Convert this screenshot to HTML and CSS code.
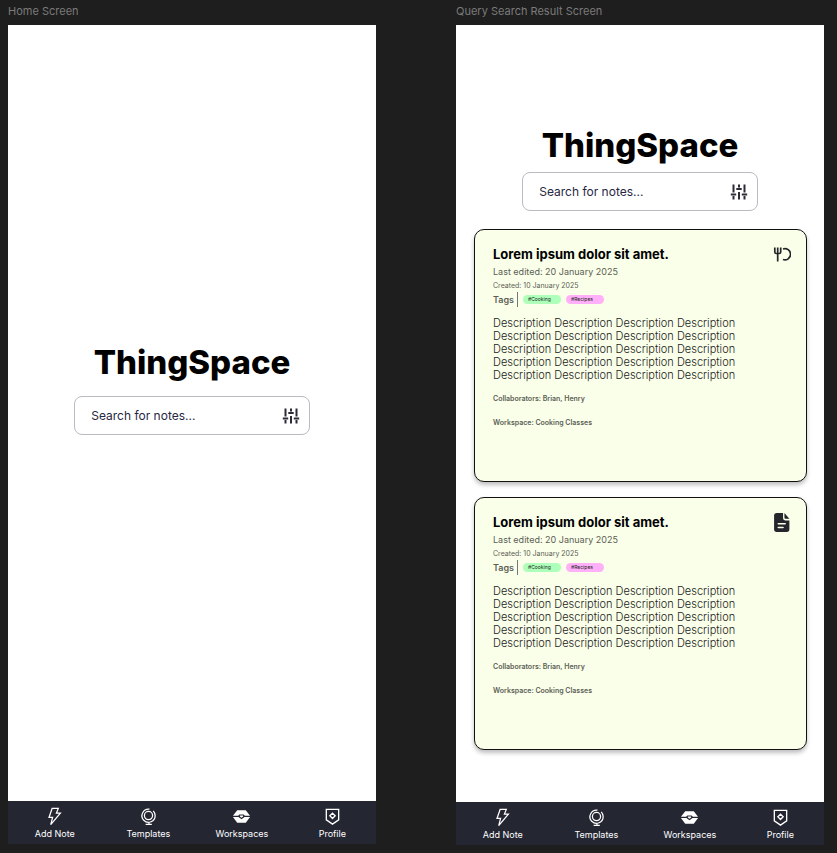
FILE: index.html
```html
<!DOCTYPE html>
<html lang="en">
<head>
<meta charset="utf-8">
<meta name="viewport" content="width=device-width, initial-scale=1">
<title>ThingSpace</title>
<link rel="stylesheet" href="styles.css">
</head>
<body>
<svg class="sprite" aria-hidden="true">
  <symbol id="i-filter" viewBox="0 0 18 18"><path d="M3.500 1.500v8M3.500 13v3.500M9 1.500v3M9 9v7.500M14.500 1.500v8M14.500 13v3.500" fill="none" stroke="currentColor" stroke-width="2"/><path d="M.8 11.500h5.400M6.300 6h5.400M11.800 11.500h5.400" fill="none" stroke="currentColor" stroke-width="1.800"/></symbol>
  <symbol id="i-bolt" viewBox="0 0 20 20"><path d="M7.500 1.500h6.500l-2 5h4.200L6 18.500l2-7.500H4.200z" fill="none" stroke="currentColor" stroke-width="1.300"/></symbol>
  <symbol id="i-globe" viewBox="0 0 20 20"><g fill="none" stroke="currentColor" stroke-width="1.300"><circle cx="10" cy="9" r="4.300"/><path d="M11 2.300A7 7 0 0 0 5 14a7 7 0 0 0 12-5c0-2-.8-3.700-2-5M10.500 16v2.300M7 18.300h6.500"/></g></symbol>
  <symbol id="i-work" viewBox="0 0 20 20"><path d="M5.500 3.500h9L19 9.300h-5.500l-1.200-1.500H7.700L6.500 9.300H1zM1 10.500h5.800L10 13l3.200-2.500H19l-4.500 6h-9z" fill="currentColor"/><path d="M8.300 9h3.400v1L10 11.300 8.300 10z" fill="currentColor"/></symbol>
  <symbol id="i-shield" viewBox="0 0 20 20"><path d="M3.500 2.500h13v11L10 18l-6.500-4.500zM10 6.500l2.800 2.800L10 12.100 7.200 9.300z" fill="none" stroke="currentColor" stroke-width="1.400"/></symbol>
  <symbol id="i-food" viewBox="0 0 18 16"><path d="M1.800 1v4.500q0 1.500 1.500 1.500h2.900q1.500 0 1.500-1.500V1M4.700 1v14M10 2.500a5.600 5.600 0 1 1 0 10.500" fill="none" stroke="currentColor" stroke-width="1.700"/></symbol>
  <symbol id="i-file" viewBox="0 0 16 18"><path d="M3 0h6v5q0 2 2 2h4v8.500q0 2.500-2.500 2.500H3q-2.500 0-2.500-2.500v-13Q.5 0 3 0z" fill="currentColor"/><path d="M10.300 0 15 5.500h-3.700q-1 0-1-1z" fill="currentColor"/><path d="M4.500 10.200h6.500M4.500 13.800h4.500" stroke="#faffe9" stroke-width="1.500" stroke-linecap="round"/></symbol>
</svg>

<section class="board board--home">
  <h2 class="board__name">Home Screen</h2>
  <div class="screen">
    <main class="screen__body">
      <h1 class="brand">ThingSpace</h1>
      <form class="search">
        <input class="search__input" type="text" placeholder="Search for notes..." aria-label="Search for notes">
        <button class="search__filter" type="button" aria-label="Filters"><svg><use href="#i-filter"/></svg></button>
      </form>
    </main>
    <nav class="tabs">
      <a class="tab" href="#"><svg><use href="#i-bolt"/></svg>Add Note</a>
      <a class="tab" href="#"><svg><use href="#i-globe"/></svg>Templates</a>
      <a class="tab" href="#"><svg><use href="#i-work"/></svg>Workspaces</a>
      <a class="tab" href="#"><svg><use href="#i-shield"/></svg>Profile</a>
    </nav>
  </div>
</section>

<section class="board board--results">
  <h2 class="board__name">Query Search Result Screen</h2>
  <div class="screen">
    <main class="screen__body">
      <h1 class="brand">ThingSpace</h1>
      <form class="search">
        <input class="search__input" type="text" placeholder="Search for notes..." aria-label="Search for notes">
        <button class="search__filter" type="button" aria-label="Filters"><svg><use href="#i-filter"/></svg></button>
      </form>
      <div class="notes">
        <article class="note">
          <header class="note__head"><h3 class="note__title">Lorem ipsum dolor sit amet.</h3><svg class="note__icon"><use href="#i-food"/></svg></header>
          <p class="note__edited">Last edited: 20 January 2025</p>
          <p class="note__created">Created: 10 January 2025</p>
          <div class="tags"><span class="tags__label">Tags</span><span class="tag tag--green">#Cooking</span><span class="tag tag--pink">#Recipes</span></div>
          <p class="note__text">Description Description Description Description Description Description Description Description Description Description Description Description Description Description Description Description Description Description Description Description</p>
          <p class="note__meta">Collaborators: Brian, Henry</p>
          <p class="note__meta">Workspace: Cooking Classes</p>
        </article>
        <article class="note">
          <header class="note__head"><h3 class="note__title">Lorem ipsum dolor sit amet.</h3><svg class="note__icon"><use href="#i-file"/></svg></header>
          <p class="note__edited">Last edited: 20 January 2025</p>
          <p class="note__created">Created: 10 January 2025</p>
          <div class="tags"><span class="tags__label">Tags</span><span class="tag tag--green">#Cooking</span><span class="tag tag--pink">#Recipes</span></div>
          <p class="note__text">Description Description Description Description Description Description Description Description Description Description Description Description Description Description Description Description Description Description Description Description</p>
          <p class="note__meta">Collaborators: Brian, Henry</p>
          <p class="note__meta">Workspace: Cooking Classes</p>
        </article>
      </div>
    </main>
    <nav class="tabs">
      <a class="tab" href="#"><svg><use href="#i-bolt"/></svg>Add Note</a>
      <a class="tab" href="#"><svg><use href="#i-globe"/></svg>Templates</a>
      <a class="tab" href="#"><svg><use href="#i-work"/></svg>Workspaces</a>
      <a class="tab" href="#"><svg><use href="#i-shield"/></svg>Profile</a>
    </nav>
  </div>
</section>
</body>
</html>
```
FILE: styles.css
```css
* { box-sizing: border-box; margin: 0; }

body {
  display: grid;
  grid-template-columns: 1fr 1fr;
  gap: 80px;
  min-height: 100vh;
  padding: 0 13px 0 8px;
  background: #1e1e1e;
  font-family: Inter, "Liberation Sans", sans-serif;
}

.sprite { position: absolute; width: 0; height: 0; }

.board { display: flex; flex-direction: column; padding-bottom: 9px; }
.board--results { padding-bottom: 8px; }

.board__name {
  height: 25px;
  color: #7b7b7b;
  font-size: 11px;
  font-weight: 400;
  line-height: 22px;
  white-space: nowrap;
}

.screen { display: flex; flex: 1; flex-direction: column; background: #fff; }
.screen__body {
  display: flex;
  flex: 1;
  flex-direction: column;
  align-items: center;
  gap: 12px;
  padding-top: 315px;
}
.board--results .screen__body { gap: 5px; padding-top: 98px; }

.brand {
  color: #000;
  font-size: 33px;
  font-weight: 800;
  line-height: 44px;
}

.search {
  display: flex;
  align-items: center;
  width: 64%;
  height: 39px;
  padding: 0 9px 0 16px;
  border: 1px solid #bbbac3;
  border-radius: 8px;
}
.search__input {
  flex: 1;
  min-width: 0;
  padding: 0;
  border: 0;
  outline: 0;
  background: none;
  color: #27273f;
  font: 400 12px Inter, "Liberation Sans", sans-serif;
}
.search__input::placeholder { color: #27273f; opacity: 1; }
.search__filter {
  display: flex;
  padding: 0;
  border: 0;
  background: none;
  color: #2b2c38;
}
.search__filter svg { width: 18px; height: 18px; }

.notes {
  display: flex;
  flex-direction: column;
  gap: 15px;
  align-self: stretch;
  padding: 13px 17px 51px 18px;
}

.note {
  min-height: 253px;
  padding: 15px 15px 15px 18px;
  border: 1px solid #111;
  border-radius: 10px;
  background: #faffe9;
  box-shadow: 0 3px 4px rgba(0, 0, 0, 0.25);
  color: #5c5e56;
}
.note__head { display: flex; justify-content: space-between; height: 19px; }
.note__title { color: #000; font-size: 13px; font-weight: 700; line-height: 18px; }
.note__icon { width: 18px; height: 19px; color: #25262b; }
.note__edited { font-size: 9px; line-height: 16px; }
.note__created { font-size: 7px; line-height: 12px; }

.tags { display: flex; align-items: center; height: 14px; }
.tags__label {
  margin-right: 5px;
  padding-right: 3px;
  border-right: 1px solid #777;
  font-size: 9px;
  font-weight: 600;
  line-height: 15px;
}
.tag {
  width: 38px;
  margin-right: 5px;
  padding-left: 5px;
  border-radius: 5px;
  color: #222;
  font-size: 5px;
  line-height: 9px;
}
.tag--green { background: #adffb9; }
.tag--pink { background: #ffb0f8; }

.note__text {
  width: 250px;
  max-width: 100%;
  margin: 11px 0 12px;
  color: #222;
  font-size: 11px;
  font-weight: 300;
  line-height: 13px;
}
.note__meta { margin-bottom: 14px; font-size: 7px; font-weight: 600; line-height: 10px; }

.tabs { display: grid; grid-template-columns: 15fr 15fr 15fr 14fr; height: 43px; background: #242632; }
.tab {
  display: flex;
  flex-direction: column;
  align-items: center;
  gap: 2px;
  padding-top: 6px;
  color: #fff;
  font-size: 9px;
  line-height: 12px;
  text-decoration: none;
}
.tab svg { width: 19px; height: 19px; }
```
